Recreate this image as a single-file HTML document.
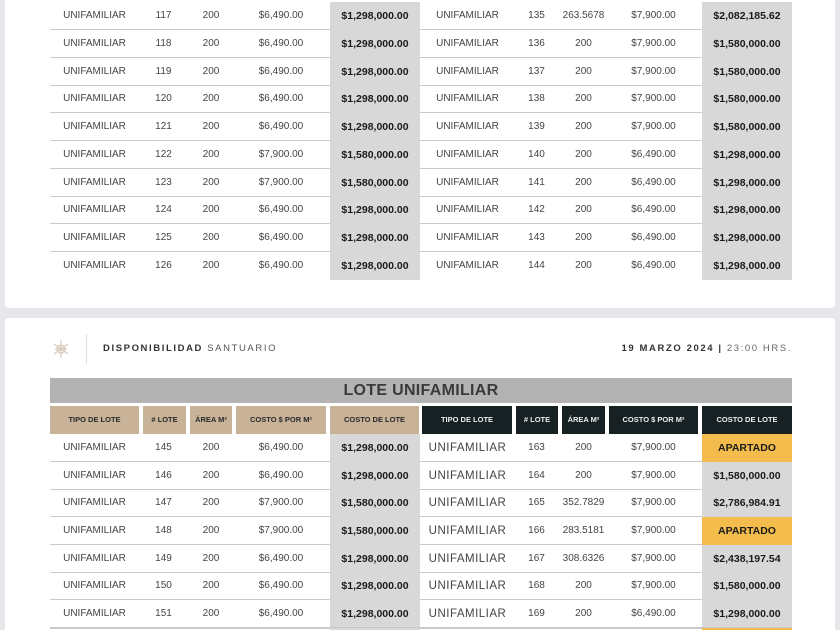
<!DOCTYPE html><html><head><meta charset="utf-8"><style>
*{margin:0;padding:0;box-sizing:border-box}
html{width:840px;height:630px;overflow:hidden}
body{width:840px;height:630px;background:#e7e7eb;position:relative;overflow:hidden;font-family:"Liberation Sans",Arial,sans-serif}
.card{position:absolute;left:5px;width:830px;background:#fff;border-radius:3px}
.r{position:absolute;left:50px;width:742px;height:28px;border-bottom:1.5px solid #c9c9c9;font-size:10px;color:#444}
.r span{position:absolute;top:0;height:28px;line-height:28px;text-align:center}
.c1{left:0;width:89px}.c2{left:89px;width:49px}.c3{left:138px;width:46px}.c4{left:184px;width:94px}
.c5{left:280px;width:90px;background:#d8d8d8;font-weight:bold;color:#1a1a1a;font-size:10.5px}
.c6{left:372px;width:91px}.c7{left:463px;width:47px}.c8{left:510px;width:47px}.c9{left:557px;width:93px}
.c10{left:652px;width:90px;background:#d8d8d8;font-weight:bold;color:#1a1a1a;font-size:10.5px}
.big .c6{font-size:11.5px;letter-spacing:.5px}
.y{background:#f4bc4c!important}
.h{position:absolute;top:406px;height:28px;line-height:28px;text-align:center;font-size:7.5px;font-weight:bold}
.t{background:#c9b398;color:#2a2a2a}.d{background:#172022;color:#eee}
</style></head><body>
<div class="card" style="top:-10px;height:318px"></div>
<div class="card" style="top:318px;height:320px"></div>

<div class="r" style="top:2px"><span class="c1">UNIFAMILIAR</span><span class="c2">117</span><span class="c3">200</span><span class="c4">$6,490.00</span><span class="c5">$1,298,000.00</span><span class="c6">UNIFAMILIAR</span><span class="c7">135</span><span class="c8">263.5678</span><span class="c9">$7,900.00</span><span class="c10">$2,082,185.62</span></div>
<div class="r" style="top:30px"><span class="c1">UNIFAMILIAR</span><span class="c2">118</span><span class="c3">200</span><span class="c4">$6,490.00</span><span class="c5">$1,298,000.00</span><span class="c6">UNIFAMILIAR</span><span class="c7">136</span><span class="c8">200</span><span class="c9">$7,900.00</span><span class="c10">$1,580,000.00</span></div>
<div class="r" style="top:58px"><span class="c1">UNIFAMILIAR</span><span class="c2">119</span><span class="c3">200</span><span class="c4">$6,490.00</span><span class="c5">$1,298,000.00</span><span class="c6">UNIFAMILIAR</span><span class="c7">137</span><span class="c8">200</span><span class="c9">$7,900.00</span><span class="c10">$1,580,000.00</span></div>
<div class="r" style="top:85px"><span class="c1">UNIFAMILIAR</span><span class="c2">120</span><span class="c3">200</span><span class="c4">$6,490.00</span><span class="c5">$1,298,000.00</span><span class="c6">UNIFAMILIAR</span><span class="c7">138</span><span class="c8">200</span><span class="c9">$7,900.00</span><span class="c10">$1,580,000.00</span></div>
<div class="r" style="top:113px"><span class="c1">UNIFAMILIAR</span><span class="c2">121</span><span class="c3">200</span><span class="c4">$6,490.00</span><span class="c5">$1,298,000.00</span><span class="c6">UNIFAMILIAR</span><span class="c7">139</span><span class="c8">200</span><span class="c9">$7,900.00</span><span class="c10">$1,580,000.00</span></div>
<div class="r" style="top:141px"><span class="c1">UNIFAMILIAR</span><span class="c2">122</span><span class="c3">200</span><span class="c4">$7,900.00</span><span class="c5">$1,580,000.00</span><span class="c6">UNIFAMILIAR</span><span class="c7">140</span><span class="c8">200</span><span class="c9">$6,490.00</span><span class="c10">$1,298,000.00</span></div>
<div class="r" style="top:169px"><span class="c1">UNIFAMILIAR</span><span class="c2">123</span><span class="c3">200</span><span class="c4">$7,900.00</span><span class="c5">$1,580,000.00</span><span class="c6">UNIFAMILIAR</span><span class="c7">141</span><span class="c8">200</span><span class="c9">$6,490.00</span><span class="c10">$1,298,000.00</span></div>
<div class="r" style="top:196px"><span class="c1">UNIFAMILIAR</span><span class="c2">124</span><span class="c3">200</span><span class="c4">$6,490.00</span><span class="c5">$1,298,000.00</span><span class="c6">UNIFAMILIAR</span><span class="c7">142</span><span class="c8">200</span><span class="c9">$6,490.00</span><span class="c10">$1,298,000.00</span></div>
<div class="r" style="top:224px"><span class="c1">UNIFAMILIAR</span><span class="c2">125</span><span class="c3">200</span><span class="c4">$6,490.00</span><span class="c5">$1,298,000.00</span><span class="c6">UNIFAMILIAR</span><span class="c7">143</span><span class="c8">200</span><span class="c9">$6,490.00</span><span class="c10">$1,298,000.00</span></div>
<div class="r" style="top:252px;border-bottom:none"><span class="c1">UNIFAMILIAR</span><span class="c2">126</span><span class="c3">200</span><span class="c4">$6,490.00</span><span class="c5">$1,298,000.00</span><span class="c6">UNIFAMILIAR</span><span class="c7">144</span><span class="c8">200</span><span class="c9">$6,490.00</span><span class="c10">$1,298,000.00</span></div>

<svg style="position:absolute;left:50px;top:338px" width="22" height="22" viewBox="0 0 22 22"><g stroke="#d8ccba" stroke-width="1.2" fill="none"><path d="M11 2V20M4 6L18 16M18 6L4 16M5 11H17"/><circle cx="11" cy="11" r="4"/></g></svg>
<div style="position:absolute;left:86px;top:334px;width:1px;height:30px;background:#ddd"></div>
<div style="position:absolute;left:103px;top:343px;font-size:9.5px;letter-spacing:1.6px;color:#555"><b style="color:#333">DISPONIBILIDAD</b> SANTUARIO</div>
<div style="position:absolute;right:48px;top:343px;font-size:9.5px;letter-spacing:1.6px;color:#666"><b style="color:#333">19 MARZO 2024 |</b> 23:00 HRS.</div>

<div style="position:absolute;left:50px;top:378px;width:742px;height:25px;background:#b3b3b3;text-align:center;line-height:25px;font-size:16px;font-weight:bold;color:#3a3a3a;letter-spacing:.3px">LOTE UNIFAMILIAR</div>
<div class="h t" style="left:50px;width:89px">TIPO DE LOTE</div>
<div class="h t" style="left:143px;width:43px"># LOTE</div>
<div class="h t" style="left:190px;width:42px">ÁREA M²</div>
<div class="h t" style="left:236px;width:90px">COSTO $ POR M²</div>
<div class="h t" style="left:330px;width:89px">COSTO DE LOTE</div>
<div class="h d" style="left:422px;width:90px">TIPO DE LOTE</div>
<div class="h d" style="left:516px;width:42px"># LOTE</div>
<div class="h d" style="left:562px;width:43px">ÁREA M²</div>
<div class="h d" style="left:609px;width:89px">COSTO $ POR M²</div>
<div class="h d" style="left:702px;width:90px">COSTO DE LOTE</div>

<div class="r big" style="top:434px"><span class="c1">UNIFAMILIAR</span><span class="c2">145</span><span class="c3">200</span><span class="c4">$6,490.00</span><span class="c5">$1,298,000.00</span><span class="c6">UNIFAMILIAR</span><span class="c7">163</span><span class="c8">200</span><span class="c9">$7,900.00</span><span class="c10 y">APARTADO</span></div>
<div class="r big" style="top:462px"><span class="c1">UNIFAMILIAR</span><span class="c2">146</span><span class="c3">200</span><span class="c4">$6,490.00</span><span class="c5">$1,298,000.00</span><span class="c6">UNIFAMILIAR</span><span class="c7">164</span><span class="c8">200</span><span class="c9">$7,900.00</span><span class="c10">$1,580,000.00</span></div>
<div class="r big" style="top:489px"><span class="c1">UNIFAMILIAR</span><span class="c2">147</span><span class="c3">200</span><span class="c4">$7,900.00</span><span class="c5">$1,580,000.00</span><span class="c6">UNIFAMILIAR</span><span class="c7">165</span><span class="c8">352.7829</span><span class="c9">$7,900.00</span><span class="c10">$2,786,984.91</span></div>
<div class="r big" style="top:517px"><span class="c1">UNIFAMILIAR</span><span class="c2">148</span><span class="c3">200</span><span class="c4">$7,900.00</span><span class="c5">$1,580,000.00</span><span class="c6">UNIFAMILIAR</span><span class="c7">166</span><span class="c8">283.5181</span><span class="c9">$7,900.00</span><span class="c10 y">APARTADO</span></div>
<div class="r big" style="top:545px"><span class="c1">UNIFAMILIAR</span><span class="c2">149</span><span class="c3">200</span><span class="c4">$6,490.00</span><span class="c5">$1,298,000.00</span><span class="c6">UNIFAMILIAR</span><span class="c7">167</span><span class="c8">308.6326</span><span class="c9">$7,900.00</span><span class="c10">$2,438,197.54</span></div>
<div class="r big" style="top:572px"><span class="c1">UNIFAMILIAR</span><span class="c2">150</span><span class="c3">200</span><span class="c4">$6,490.00</span><span class="c5">$1,298,000.00</span><span class="c6">UNIFAMILIAR</span><span class="c7">168</span><span class="c8">200</span><span class="c9">$7,900.00</span><span class="c10">$1,580,000.00</span></div>
<div class="r big" style="top:600px;height:30px;border-bottom:none"><span class="c1">UNIFAMILIAR</span><span class="c2">151</span><span class="c3">200</span><span class="c4">$6,490.00</span><span class="c5">$1,298,000.00</span><span class="c6">UNIFAMILIAR</span><span class="c7">169</span><span class="c8">200</span><span class="c9">$6,490.00</span><span class="c10">$1,298,000.00</span></div>
<div style="position:absolute;left:50px;top:627px;width:742px;height:1.5px;background:#c9c9c9"></div>
<div style="position:absolute;left:330px;top:628px;width:90px;height:2px;background:#d8d8d8"></div>
<div style="position:absolute;left:702px;top:628px;width:90px;height:2px;background:#f4bc4c"></div>
</body></html>
